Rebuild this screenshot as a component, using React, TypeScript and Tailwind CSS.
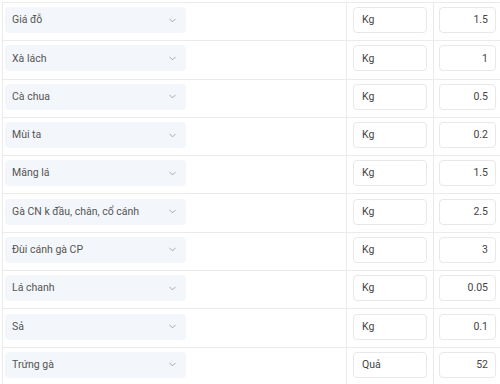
import { ChevronDown } from "lucide-react";

const rows = [
  { name: "Giá đỗ", unit: "Kg", qty: "1.5" },
  { name: "Xà lách", unit: "Kg", qty: "1" },
  { name: "Cà chua", unit: "Kg", qty: "0.5" },
  { name: "Mùi ta", unit: "Kg", qty: "0.2" },
  { name: "Măng lá", unit: "Kg", qty: "1.5" },
  { name: "Gà CN k đầu, chân, cổ cánh", unit: "Kg", qty: "2.5" },
  { name: "Đùi cánh gà CP", unit: "Kg", qty: "3" },
  { name: "Lá chanh", unit: "Kg", qty: "0.05" },
  { name: "Sả", unit: "Kg", qty: "0.1" },
  { name: "Trứng gà", unit: "Quả", qty: "52" },
];

export default function App() {
  return (
    <div
      className="h-[384px] w-[500px] overflow-hidden bg-white pl-[2px] pt-[2px]"
      style={{ fontFamily: "Roboto, 'Noto Sans', sans-serif" }}
    >
      <div className="border-l border-t border-[#ebebeb]">
        {rows.map((row, i) => (
          <div
            key={i}
            className="grid h-[38.3px] grid-cols-[343px_87px_1fr] border-b border-[#ebebeb]"
          >
            {/* Product select */}
            <div className="flex items-center pb-[3px] pl-[2px]">
              <div className="flex h-[26px] w-[181px] items-center justify-between rounded-[4px] bg-[#f3f6fa] pl-[7px] pr-[8px]">
                <span className="text-[10.5px] text-[#555]">{row.name}</span>
                <ChevronDown size={11} strokeWidth={1.5} className="text-[#80868f]" />
              </div>
            </div>

            {/* Unit */}
            <div className="flex items-center border-l border-[#ebebeb] pb-[3px] pl-[6px]">
              <div className="flex h-[26px] w-[74px] items-center rounded-[4px] border border-[#e8e8e8] pl-[8px] text-[10.5px] text-[#444]">
                {row.unit}
              </div>
            </div>

            {/* Quantity */}
            <div className="flex items-center border-l border-[#ebebeb] pb-[3px] pl-[5px]">
              <div className="flex h-[26px] w-[57px] items-center justify-end rounded-[4px] border border-[#e8e8e8] pr-[7px] text-[10.5px] text-[#444]">
                {row.qty}
              </div>
            </div>
          </div>
        ))}
      </div>
    </div>
  );
}
